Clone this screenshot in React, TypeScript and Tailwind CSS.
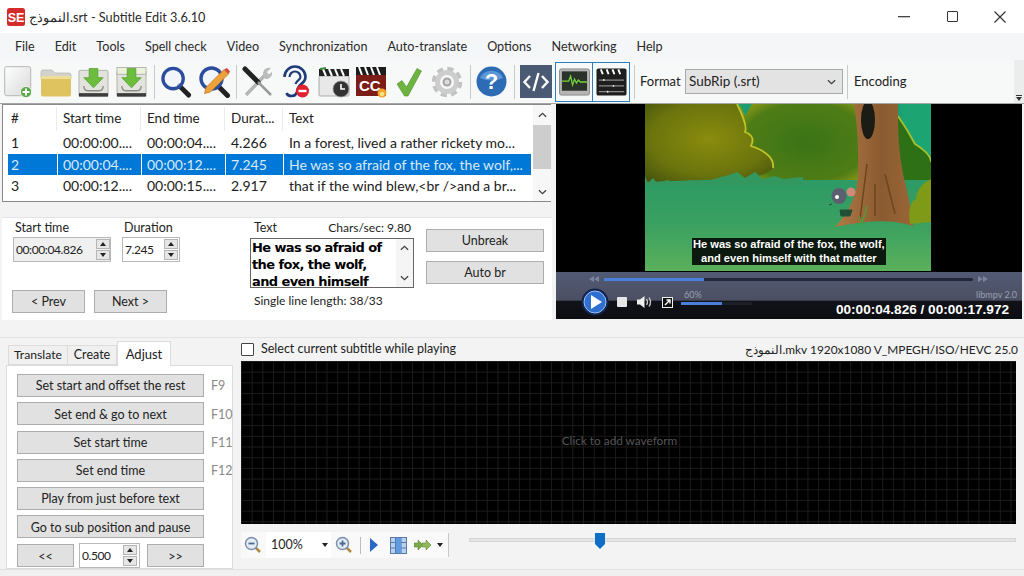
import React from "react";

const Sep = ({ className }: { className: string }) => <div className={`w-px h-[34px] bg-[#c9c9c9] shrink-0 ${className}`} />;

const Btn = ({ className, children }: { className: string; children: React.ReactNode }) => (
  <div className={`flex items-center justify-center shrink-0 bg-[#e1e1e1] border border-[#adadad] text-[#222] pt-[2px] ${className}`}>{children}</div>
);

const Spin = () => (
  <div className="flex flex-col gap-px shrink-0">
    <div className="w-[14px] h-[10px] bg-[#e6e6e6] border border-[#b5b5b5] flex items-center justify-center">
      <div className="w-0 h-0 border-x-[3px] border-x-transparent border-b-[4px] border-b-[#222]" />
    </div>
    <div className="w-[14px] h-[10px] bg-[#e6e6e6] border border-[#b5b5b5] flex items-center justify-center">
      <div className="w-0 h-0 border-x-[3px] border-x-transparent border-t-[4px] border-t-[#222]" />
    </div>
  </div>
);

const Chevron = ({ up }: { up?: boolean }) => (
  <svg viewBox="0 0 10 6" className="w-[9px] h-[6px]">
    <path d={up ? "M1 5L5 1.2L9 5" : "M1 1L5 4.8L9 1"} fill="none" stroke="#444" strokeWidth="1.5" />
  </svg>
);

const NewDoc = ({ className }: { className: string }) => (
  <svg viewBox="0 0 28 32" className={className}>
    <defs><linearGradient id="nd" x1="0" y1="0" x2="1" y2="1"><stop offset="0" stopColor="#fff" /><stop offset="1" stopColor="#d8d8d8" /></linearGradient></defs>
    <rect x="0.7" y="0.7" width="26" height="29" rx="2" fill="url(#nd)" stroke="#b5b5b5" />
    <circle cx="22" cy="26" r="5.6" fill="#58a845" stroke="#fff" strokeWidth="0.8" />
    <path d="M22 22.5v7M18.5 26h7" stroke="#fff" strokeWidth="2" />
  </svg>
);
const Folder = ({ className }: { className: string }) => (
  <svg viewBox="0 0 32 28" className={className}>
    <path d="M1 6V3q0-2 2-2h9l3 3h14q2 0 2 2v4H1z" fill="#d3d3cd" stroke="#b4b4ae" strokeWidth="0.7" />
    <rect x="1" y="7" width="30" height="20.5" rx="2" fill="#dfc35f" />
    <rect x="1" y="7" width="30" height="3" rx="1" fill="#efdd98" />
  </svg>
);
const SaveIcon = ({ className, top }: { className: string; top?: boolean }) => (
  <svg viewBox="0 0 32 32" className={className}>
    <rect x="1" y="4" width="30" height="27" rx="1.5" fill="#e3e3dd" stroke="#a5a59d" strokeWidth="0.8" />
    {top && <rect x="1" y="1" width="30" height="7" fill="#eef2dd" stroke="#a5a59d" strokeWidth="0.8" />}
    {top && <rect x="13" y="3.5" width="2" height="2" fill="#222" />}
    <path d="M6 20q0 5 5 5h10q5 0 5-5" fill="none" stroke="#8d8d85" strokeWidth="1.4" />
    <rect x="1" y="27.5" width="30" height="3.5" fill="#3c3c3c" />
    <path d="M11.5 2h9v9.5h5.5L16 22 6 11.5h5.500z" fill="#6cbc3e" stroke="#4d9a28" strokeWidth="0.7" />
  </svg>
);
const Find = ({ className, pencil }: { className: string; pencil?: boolean }) => (
  <svg viewBox="0 0 33 33" className={className}>
    <path d="M20 21L29.500 30.500" stroke="#222" strokeWidth="5" strokeLinecap="round" />
    <circle cx="13.500" cy="13.500" r="10.500" fill="#eef2f8" fillOpacity="0.7" stroke="#2c4d9d" strokeWidth="3.4" />
    {pencil && <path d="M6.500 28.500L8 22.500L26 4.500L30.500 9L12.500 27z" fill="#eda238" stroke="#b06a1c" strokeWidth="0.6" />}
    {pencil && <path d="M26 4.500L30.500 9L32 6.500L29 3z" fill="#d8473e" />}
  </svg>
);
const Tools = ({ className }: { className: string }) => (
  <svg viewBox="0 0 32 32" className={className}>
    <path d="M25 7L4 29" stroke="#b5b5b5" strokeWidth="3.500" />
    <path d="M21 8a6 6 0 0 1 8-6l-4 4 1.500 2.500L30 6a6 6 0 0 1-7 7z" fill="#bcbcbc" />
    <path d="M3 3L16 16" stroke="#222" strokeWidth="5" strokeLinecap="round" />
    <path d="M16 16L29 29" stroke="#9a9a9a" strokeWidth="2.500" />
  </svg>
);
const Ear = ({ className }: { className: string }) => (
  <svg viewBox="0 0 27 33" className={className}>
    <path d="M2.500 12a10.500 10.500 0 0 1 21 0c0 7-7 6-8 13q-1 6-6 6-4 0-5-3" fill="none" stroke="#1f3c7a" strokeWidth="2.600" />
    <path d="M7.500 12a5.500 5.500 0 0 1 11 0c0 3-4 3-5 7" fill="none" stroke="#1f3c7a" strokeWidth="2.200" />
    <circle cx="20.500" cy="26" r="6.500" fill="#e0202c" />
    <rect x="16.500" y="24.800" width="8" height="2.400" fill="#fff" />
  </svg>
);
const Clapper = ({ className }: { className: string }) => (
  <svg viewBox="0 0 32 32" className={className}>
    <rect x="1" y="10" width="30" height="20" rx="1" fill="#e8e8e8" stroke="#999" strokeWidth="0.8" />
    <rect x="1" y="3" width="30" height="7" fill="#222" />
    <path d="M5 3l3 7M11 3l3 7M17 3l3 7M23 3l3 7" stroke="#fff" strokeWidth="2" />
    <path d="M2 3l6-1" stroke="#3f8f3f" strokeWidth="2" />
    <circle cx="23" cy="23" r="8" fill="#333" stroke="#999" strokeWidth="0.8" />
    <path d="M23 18v5h4" stroke="#fff" strokeWidth="1.600" fill="none" />
  </svg>
);
const CCIcon = ({ className }: { className: string }) => (
  <svg viewBox="0 0 32 32" className={className}>
    <rect x="1" y="1" width="30" height="8" fill="#1c1c1c" />
    <path d="M4 1l3 8M10 1l3 8M16 1l3 8M22 1l3 8" stroke="#fff" strokeWidth="2" />
    <rect x="1" y="9" width="30" height="21" fill="#7c1d18" />
    <text x="4" y="25" fontFamily="Liberation Sans" fontWeight="700" fontSize="15" fill="#fff">CC</text>
    <circle cx="27" cy="27" r="4.500" fill="#f3a52b" />
    <circle cx="27" cy="28" r="2.200" fill="#fbe48a" />
  </svg>
);
const Check = ({ className }: { className: string }) => (
  <svg viewBox="0 0 26 30" className={className}>
    <path d="M1 17L6 13.500L10.500 20L21 1.500L25.500 4L12 29H8.500z" fill="#6cb33f" stroke="#558f2f" strokeWidth="0.6" />
  </svg>
);
const Gear = ({ className }: { className: string }) => (
  <svg viewBox="0 0 32 32" className={className}>
    <circle cx="16" cy="16" r="12.500" fill="none" stroke="#c2c2c2" strokeWidth="5.500" strokeDasharray="5.800 4" />
    <circle cx="16" cy="16" r="9.500" fill="none" stroke="#cdcdcd" strokeWidth="5" />
    <circle cx="16" cy="16" r="4.500" fill="#a5a5a5" />
    <circle cx="16" cy="16" r="2.500" fill="#dcdcdc" />
  </svg>
);
const Help = ({ className }: { className: string }) => (
  <svg viewBox="0 0 31 31" className={className}>
    <circle cx="15.500" cy="15.500" r="15" fill="#2d6cb5" />
    <path d="M4 12a12 10 0 0 1 23 0q-11 5-23 0z" fill="#5c97d6" />
    <text x="15.500" y="23" textAnchor="middle" fontFamily="Liberation Sans" fontWeight="700" fontSize="22" fill="#fff">?</text>
  </svg>
);
const CodeIcon = ({ className }: { className: string }) => (
  <svg viewBox="0 0 32 33" className={className}>
    <rect width="32" height="33" fill="#4a5a72" />
    <path d="M10 11L4.500 17L10 23M22 11L27.500 17L22 23M18.500 8L13.500 26" fill="none" stroke="#fff" strokeWidth="2.400" />
  </svg>
);
const WaveBox = ({ className }: { className: string }) => (
  <div className={`flex items-center justify-center border-[1.500px] border-[#2b7fc0] shrink-0 ${className}`}>
    <svg viewBox="0 0 32 28" className="w-[31px] h-[28px]">
      <rect x="0.500" y="0.500" width="31" height="27" rx="2" fill="#b5b5b5" stroke="#8b8b8b" />
      <rect x="3" y="3" width="26" height="20" fill="#2a3329" />
      <path d="M3 13h7l2-5 2 9 2-6 2 4 2-3 2 2h7" fill="none" stroke="#74d43f" strokeWidth="1.300" />
    </svg>
  </div>
);
const ClapBox = ({ className }: { className: string }) => (
  <div className={`flex items-center justify-center border-[1.500px] border-[#2b7fc0] shrink-0 ${className}`}>
    <svg viewBox="0 0 32 28" className="w-[31px] h-[28px]">
      <rect x="0.500" y="0" width="31" height="28" rx="2" fill="#1e1e1e" />
      <path d="M5 1l2 5M11 1l2 5M17 1l2 5M23 1l2 5" stroke="#fff" strokeWidth="2" />
      <path d="M3 12h26M3 18h26M3 24h26" stroke="#8c8c8c" strokeWidth="1.200" />
      <path d="M8 11v2M18 17v2M12 23v2" stroke="#ddd" strokeWidth="1.500" />
    </svg>
  </div>
);

const Scene = () => (
  <svg viewBox="0 0 286 167" preserveAspectRatio="none" className="w-[286px] h-[167px] shrink-0 block">
    <defs>
      <filter id="sf" x="-2%" y="-2%" width="104%" height="104%"><feGaussianBlur stdDeviation="0.500" /></filter>
      <linearGradient id="gr" x1="0" y1="0" x2="0" y2="1"><stop offset="0" stopColor="#2c9a66" /><stop offset="0.5" stopColor="#3aa160" /><stop offset="1" stopColor="#5bb05a" /></linearGradient>
      <radialGradient id="b1" cx="0.5" cy="0.45" r="0.7"><stop offset="0" stopColor="#8a8c10" /><stop offset="0.65" stopColor="#6b7410" /><stop offset="1" stopColor="#48560f" /></radialGradient>
      <radialGradient id="b2" cx="0.55" cy="0.5" r="0.65"><stop offset="0" stopColor="#3a7412" /><stop offset="0.8" stopColor="#4f7c12" /><stop offset="1" stopColor="#7f9414" /></radialGradient>
      <linearGradient id="tr" x1="0" y1="0" x2="1" y2="0"><stop offset="0" stopColor="#b27a45" /><stop offset="0.6" stopColor="#8a5a30" /><stop offset="1" stopColor="#9a6736" /></linearGradient>
    </defs>
    <g filter="url(#sf)">
      <rect width="286" height="167" fill="#1e9d70" />
      <path d="M255 0h31v60h-20z" fill="#1fa572" />
      <rect y="74" width="286" height="93" fill="url(#gr)" />
      <path d="M95 0L100 12L107 0H215V76H100z" fill="url(#b2)" />
      <path d="M0 0H92Q103 22 100 28Q111 32 106 42Q130 50 128 64Q122 72 100 74L60 76L0 78z" fill="url(#b1)" />
      <path d="M92 0Q103 22 100 28Q111 32 106 42Q130 50 128 64" fill="none" stroke="#c0c42a" strokeWidth="1.800" />
      <path d="M253 12Q262 25 270 40Q286 50 286 58L286 76H250z" fill="#2f7016" />
      <path d="M253 12Q262 25 270 40Q286 50 286 58" fill="none" stroke="#a8c02c" strokeWidth="1.800" />
      <path d="M0 72l3 7 5-5 4 5 10-3 10 3 14-3 14 2 16-5 8-2 8-3 8 6 10-6 8 7 12-3 8 3 20-2 0 8H0z" fill="#33985f" />
      <path d="M209 0H253Q252 40 258 70Q266 100 268 122Q240 112 190 123Q212 100 213 70Q214 30 209 0z" fill="url(#tr)" />
      <ellipse cx="223" cy="16" rx="7" ry="19" fill="#1d1a14" />
      <path d="M222 60L215 115M240 70L250 110M230 80V112" stroke="#6c4522" strokeWidth="1.500" fill="none" />
      <path d="M286 75Q272 82 271 95Q262 100 265 120L286 118z" fill="#7f9a18" />
      <path d="M214 112L217 120L222 102" stroke="#4f9a3c" strokeWidth="1.500" fill="none" />
      <ellipse cx="194" cy="92" rx="7.500" ry="8" fill="#5a6070" />
      <circle cx="206" cy="88" r="4.500" fill="#cf8a7a" />
      <circle cx="192" cy="93" r="2" fill="#fff" />
      <path d="M187 100l-3 1M195 106h12l-2 6h-9z" fill="#235038" stroke="#235038" />
    </g>
  </svg>
);

const Row = ({ n, s, e, d, t, sel }: { n: string; s: string; e: string; d: string; t: string; sel?: boolean }) => {
  const cls = sel ? "bg-[#0078d7] text-[#dbe9f7]" : "text-[#222]";
  return (
    <div className="flex h-[21.7px] items-center gap-px text-[14px]">
      <div className={`w-[49px] h-full flex items-center pl-[3px] ${cls}`}>{n}</div>
      <div className={`w-[83px] h-full flex items-center pl-[5px] ${cls}`}>{s}</div>
      <div className={`w-[83px] h-full flex items-center pl-[5px] ${cls}`}>{e}</div>
      <div className={`w-[57px] h-full flex items-center pl-[5px] ${cls}`}>{d}</div>
      <div className={`w-[247px] h-full flex items-center pl-[5px] whitespace-nowrap ${cls}`}>{t}</div>
    </div>
  );
};

const Rewind = ({ flip }: { flip?: boolean }) => (
  <svg viewBox="0 0 10 6" className="w-[10px] h-[6px] shrink-0">
    <path d={flip ? "M0 0l5 3-5 3zM5 0l5 3-5 3z" : "M10 0L5 3l5 3zM5 0L0 3l5 3z"} fill="#7c849c" />
  </svg>
);

export default function App() {
  return (
    <div className="w-[1024px] h-[576px] overflow-hidden flex flex-col bg-[#f3f3f3] text-[12.500px] leading-none text-[#222] font-['Lato','Noto_Sans','Noto_Sans_CJK_SC',sans-serif]">
      {/* title */}
      <div className="h-[33px] bg-white flex items-center shrink-0 pl-[7px]">
        <svg viewBox="0 0 18 18" className="w-[18px] h-[18px] shrink-0">
          <rect width="18" height="18" rx="2.500" fill="#d42b2b" />
          <text x="9" y="13.500" textAnchor="middle" fontFamily="Liberation Sans" fontWeight="700" fontSize="12.500" fill="#fff">SE</text>
        </svg>
        <span className="ml-[4px] pt-[2px] text-[#2a2a2a] text-[12.700px]">النموذج.srt - Subtitle Edit 3.6.10</span>
        <div className="ml-auto flex items-center">
          <svg viewBox="0 0 12 2" className="w-[12px] h-[2px] mr-[37px]"><rect width="12" height="1.300" fill="#444" /></svg>
          <div className="w-[11px] h-[11px] border-[1.300px] border-[#333] rounded-[1px] mr-[36px]" />
          <svg viewBox="0 0 12 12" className="w-[12px] h-[12px] mr-[18px]"><path d="M.5.5l11 11M11.500.5l-11 11" stroke="#333" strokeWidth="1.200" /></svg>
        </div>
      </div>
      {/* menu */}
      <div className="h-[27px] bg-[#f5f6f7] flex items-center gap-5 pl-[15px] pt-[2px] shrink-0 text-[#2a2a2a] text-[12.600px]">
        <span>File</span><span>Edit</span><span>Tools</span><span>Spell check</span><span>Video</span>
        <span>Synchronization</span><span>Auto-translate</span><span>Options</span><span>Networking</span><span>Help</span>
      </div>
      {/* toolbar */}
      <div className="h-[44px] bg-[#f7f8f8] flex items-center pl-[4px] shrink-0 border-b border-b-[#a5a5a5] relative text-[13px]">
        <NewDoc className="w-[28px] h-[32px] shrink-0" />
        <Folder className="w-[32px] h-[28px] ml-[8px] mt-[2px] shrink-0" />
        <SaveIcon className="w-[31px] h-[32px] ml-[6px] shrink-0" />
        <SaveIcon top className="w-[31px] h-[32px] ml-[7px] shrink-0" />
        <Sep className="ml-[7px]" />
        <Find className="w-[32px] h-[33px] ml-[5px] shrink-0" />
        <Find pencil className="w-[33px] h-[33px] ml-[6px] shrink-0" />
        <Sep className="ml-[5px]" />
        <Tools className="w-[32px] h-[32px] ml-[5px] shrink-0" />
        <Ear className="w-[27px] h-[33px] ml-[8px] shrink-0" />
        <Clapper className="w-[32px] h-[32px] ml-[9px] shrink-0" />
        <CCIcon className="w-[32px] h-[32px] ml-[5px] shrink-0" />
        <Check className="w-[26px] h-[30px] ml-[9px] shrink-0" />
        <Gear className="w-[32px] h-[32px] ml-[9px] shrink-0" />
        <Sep className="ml-[7px]" />
        <Help className="w-[31px] h-[31px] ml-[5px] shrink-0" />
        <Sep className="ml-[7px]" />
        <CodeIcon className="w-[32px] h-[33px] ml-[5px] shrink-0" />
        <WaveBox className="w-[38px] h-[40px] ml-[3px]" />
        <ClapBox className="w-[38px] h-[40px] -ml-px" />
        <Sep className="ml-[4px]" />
        <span className="ml-[5px] w-[40px] shrink-0">Format</span>
        <div className="ml-[5px] w-[158px] h-[25px] bg-[#e3e3e3] border border-[#a8a8a8] flex items-center pl-[3px] pr-[6px] justify-between shrink-0">
          <span className="text-[13.500px]">SubRip (.srt)</span>
          <Chevron />
        </div>
        <Sep className="ml-[4px]" />
        <span className="ml-[6px]">Encoding</span>
        <div className="ml-auto self-stretch w-[10px] bg-[#ececec] flex flex-col justify-end items-center pb-[2px]">
          <div className="w-[6px] h-px bg-[#333] mb-px" />
          <div className="w-0 h-0 border-x-[3px] border-x-transparent border-t-[4px] border-t-[#333]" />
        </div>
      </div>
      {/* top area */}
      <div className="h-[216px] flex shrink-0">
        <div className="w-[556px] shrink-0 pl-[2px] flex flex-col">
          <div className="w-[549px] h-[98px] shrink-0 border border-[#8a8a8a] bg-white flex pl-[5px]">
            <div className="w-[525px] shrink-0 flex flex-col">
              <div className="flex h-[27px] items-center gap-px text-[#222] text-[13.500px]">
                <div className="w-[49px] h-[24px] flex items-center pl-[3px] border-r border-r-[#ececec]">#</div>
                <div className="w-[83px] h-[24px] flex items-center pl-[5px] border-r border-r-[#ececec]">Start time</div>
                <div className="w-[83px] h-[24px] flex items-center pl-[5px] border-r border-r-[#ececec]">End time</div>
                <div className="w-[57px] h-[24px] flex items-center pl-[5px] border-r border-r-[#ececec]">Durat...</div>
                <div className="w-[247px] h-[24px] flex items-center pl-[5px]">Text</div>
              </div>
              <Row n="1" s="00:00:00...." e="00:00:04...." d="4.266" t="In a forest, lived a rather rickety mo..." />
              <Row sel n="2" s="00:00:04...." e="00:00:12...." d="7.245" t="He was so afraid of the fox, the wolf,..." />
              <Row n="3" s="00:00:12...." e="00:00:15...." d="2.917" t="that if the wind blew,<br />and a br..." />
            </div>
            <div className="ml-auto w-[18px] shrink-0 flex flex-col items-center bg-[#f7f7f7]">
              <div className="h-[20px] flex items-center"><Chevron up /></div>
              <div className="w-full h-[44px] bg-[#cdcdcd]" />
              <div className="mt-auto h-[18px] flex items-center"><Chevron /></div>
            </div>
          </div>
          {/* edit panel */}
          <div className="mt-[15px] w-[550px] h-[103px] bg-white border-t border-t-[#e4e4e4] flex pl-[9px]">
            <div className="w-[236px] shrink-0 flex flex-col">
              <div className="flex mt-[2px] pl-[2px]">
                <div className="w-[109px] shrink-0">
                  <div className="h-[15px] pt-[2px] flex items-center pl-[2px]">Start time</div>
                  <div className="mt-[2px] w-[98px] h-[25px] bg-[#f0f0f0] border border-[#b8b8b8] flex items-center pl-[2px]">
                    <span className="w-[80px] text-[12px] tracking-[-0.400px]">00:00:04.826</span>
                    <Spin />
                  </div>
                </div>
                <div className="shrink-0">
                  <div className="h-[15px] pt-[2px] flex items-center pl-[2px]">Duration</div>
                  <div className="mt-[2px] w-[58px] h-[25px] bg-white border border-[#b8b8b8] flex items-center pl-[2px]">
                    <span className="w-[39px] text-[12px] tracking-[-0.400px]">7.245</span>
                    <Spin />
                  </div>
                </div>
              </div>
              <div className="flex gap-[9px] mt-[28px] ml-px">
                <Btn className="w-[73px] h-[23px]">&lt; Prev</Btn>
                <Btn className="w-[73px] h-[23px]">Next &gt;</Btn>
              </div>
            </div>
            <div className="w-[164px] shrink-0 ml-[3px] flex flex-col">
              <div className="h-[15px] mt-[2px] pt-[2px] flex items-center justify-between pl-[4px] pr-[3px]">
                <span className="text-[12.500px]">Text</span><span className="text-[12.100px]">Chars/sec: 9.80</span>
              </div>
              <div className="mt-[3px] h-[50px] border border-[#666] bg-white flex overflow-hidden">
                <div className="flex-1 pl-[1px] font-['DejaVu_Sans',sans-serif] font-bold text-[13px] tracking-[-0.600px] leading-[17px] text-black whitespace-nowrap">
                  He was so afraid of<br />the fox, the wolf,<br />and even himself
                </div>
                <div className="w-[17px] bg-[#f5f5f5] flex flex-col items-center justify-between py-[6px]"><Chevron up /><Chevron /></div>
              </div>
              <div className="h-[15px] mt-[5px] flex items-center pl-[4px] text-[12px]">Single line length: 38/33</div>
            </div>
            <div className="ml-[12px] mt-[11px] flex flex-col gap-[9px] shrink-0">
              <Btn className="w-[118px] h-[23px]">Unbreak</Btn>
              <Btn className="w-[118px] h-[23px]">Auto br</Btn>
            </div>
          </div>
        </div>
        <div className="w-[466px] h-[215px] shrink-0 flex flex-col bg-black">
          <div className="h-[167px] flex justify-center pr-[2px] shrink-0 relative">
            <Scene />
            <div className="absolute left-[136px] top-[134px] bg-black/85 text-white font-['Liberation_Sans',sans-serif] font-bold text-[11.100px] leading-[13.500px] text-center px-[1px] whitespace-nowrap">
              He was so afraid of the fox, the wolf,<br />and even himself with that matter
            </div>
          </div>
          <div className="h-[48px] mt-px bg-[linear-gradient(#525a74_0%,#4b4f62_60%,#101218_62%,#0d0e12_100%)] flex flex-col">
            <div className="h-[14px] flex items-center">
              <div className="ml-[33px]"><Rewind /></div>
              <div className="ml-[5px] w-[369px] h-[3px] bg-[#22273a] rounded-full">
                <div className="w-[100px] h-full bg-[#4a7fdc]" />
              </div>
              <div className="ml-[5px]"><Rewind flip /></div>
            </div>
            <div className="flex items-center h-[32px]">
              <svg viewBox="0 0 28 28" className="w-[28px] h-[28px] ml-[25px] shrink-0">
                <circle cx="14" cy="14" r="13.500" fill="#12244f" />
                <circle cx="14" cy="14" r="11" fill="#2f6fd0" stroke="#9cc0f0" strokeWidth="1" />
                <path d="M10 7L21 14L10 21z" fill="#fff" />
              </svg>
              <div className="ml-[8px] w-[10px] h-[10px] bg-[#e6e6e6] rounded-[1px] shrink-0" />
              <svg viewBox="0 0 16 14" className="w-[16px] h-[14px] ml-[10px] shrink-0">
                <path d="M0 4.500h3L7.500 1v12L3 9.500H0z" fill="#eee" />
                <path d="M9.500 4q2 3 0 6M12 2.500q3 4.500 0 9" fill="none" stroke="#ccc" strokeWidth="1.300" />
              </svg>
              <svg viewBox="0 0 11 11" className="w-[11px] h-[11px] ml-[9px] shrink-0">
                <rect x="0.500" y="0.500" width="10" height="10" fill="#111" stroke="#eee" />
                <path d="M3 8L8 3M4.500 3H8V6.500" stroke="#fff" strokeWidth="1.400" fill="none" />
              </svg>
              <div className="ml-[8px] w-[72px] shrink-0 flex flex-col -mt-[9px]">
                <span className="text-[9px] text-[#9aa0b4] pl-[3px] h-[10px]">60%</span>
                <div className="mt-[2px] w-[71px] h-[3px] bg-[#1d1f28]"><div className="w-[41px] h-full bg-[#4a7fdc]" /></div>
              </div>
              <div className="flex-1 flex flex-col items-end pr-[5px] mt-[2px] min-w-0">
                <span className="text-[9px] text-[#9aa0b4] h-[11px]">libmpv 2.0</span>
                <span className="mt-[2px] pr-[8px] text-white font-['Liberation_Sans',sans-serif] font-bold text-[13.600px] whitespace-nowrap">00:00:04.826 / 00:00:17.972</span>
              </div>
            </div>
          </div>
        </div>
      </div>
      {/* strip */}
      <div className="h-[18px] shrink-0 border-b border-b-[#e2e2e2]" />
      {/* bottom */}
      <div className="flex-1 flex min-h-0">
        <div className="w-[227px] ml-[6px] shrink-0 flex flex-col pt-[3px]">
          <div className="flex h-[25px] items-end pl-[2px]">
            <div className="w-[60px] h-[20px] bg-[#f0f0f0] border border-[#dcdcdc] flex items-center justify-center text-[12.200px]">Translate</div>
            <div className="w-[49px] h-[20px] bg-[#f0f0f0] border border-[#dcdcdc] border-l-0 flex items-center justify-center">Create</div>
            <div className="w-[54px] h-[25px] bg-white border border-[#dcdcdc] border-b-0 flex items-center justify-center -mb-px z-10 text-[13px]">Adjust</div>
          </div>
          <div className="h-[205px] bg-white border border-[#dcdcdc] pl-[10px] pt-[8px] flex flex-col gap-[5.300px]">
            {[
              ["Set start and offset the rest", "F9"],
              ["Set end & go to next", "F10"],
              ["Set start time", "F11"],
              ["Set end time", "F12"],
              ["Play from just before text", ""],
              ["Go to sub position and pause", ""],
            ].map(([t, f]) => (
              <div key={t} className="flex items-center">
                <Btn className="w-[187px] h-[23px]">{t}</Btn>
                <span className="ml-[7px] pt-[2px] text-[#8a8a8a]">{f}</span>
              </div>
            ))}
            <div className="flex items-center -mt-[0.500px]">
              <Btn className="w-[57px] h-[23px]">&lt;&lt;</Btn>
              <div className="ml-[5px] w-[61px] h-[25px] border border-[#b8b8b8] bg-white flex items-center pl-[2px] shrink-0">
                <span className="w-[41px] text-[12px] tracking-[-0.400px]">0.500</span>
                <Spin />
              </div>
              <Btn className="ml-[7px] w-[57px] h-[23px]">&gt;&gt;</Btn>
            </div>
          </div>
        </div>
        <div className="w-[775px] ml-[8px] shrink-0 flex flex-col">
          <div className="h-[23px] flex items-center shrink-0">
            <div className="w-[13px] h-[13px] border border-[#444] bg-white rounded-[1px] shrink-0" />
            <span className="ml-[7px]">Select current subtitle while playing</span>
            <span className="ml-auto -mr-[2px] whitespace-nowrap text-[11.900px]">النموذج.mkv 1920x1080 V_MPEGH/ISO/HEVC 25.0</span>
          </div>
          <div className="h-[163px] shrink-0 flex items-center justify-center pr-[18px] pb-[4px] bg-black bg-[linear-gradient(#1b1b1b_1px,transparent_1px),linear-gradient(90deg,#1b1b1b_1px,transparent_1px)] bg-[size:10.700px_10.700px] text-[#555] text-[11.800px]">
            Click to add waveform
          </div>
          <div className="flex items-center h-[34px] mt-[4px] shrink-0">
            <div className="flex items-center h-[26px] bg-[#f9f9f9] shrink-0">
              <svg viewBox="0 0 18 18" className="w-[18px] h-[18px] ml-[3px] shrink-0">
                <path d="M11 11l5 5" stroke="#b08a3e" strokeWidth="2.500" />
                <circle cx="7.500" cy="7.500" r="6" fill="#e4edf6" stroke="#7d90ab" strokeWidth="1.500" />
                <path d="M4.500 7.500h6" stroke="#4f6a92" strokeWidth="1.800" />
              </svg>
              <div className="ml-[4px] w-[65px] h-[26px] bg-white flex items-center pl-[5px] pr-[3px] justify-between shrink-0">
                <span>100%</span>
                <div className="w-0 h-0 border-x-[3px] border-x-transparent border-t-[4px] border-t-[#222]" />
              </div>
              <svg viewBox="0 0 18 18" className="w-[18px] h-[18px] ml-[4px] shrink-0">
                <path d="M11 11l5 5" stroke="#b08a3e" strokeWidth="2.500" />
                <circle cx="7.500" cy="7.500" r="6" fill="#e4edf6" stroke="#7d90ab" strokeWidth="1.500" />
                <path d="M4.500 7.500h6M7.500 4.500v6" stroke="#4f6a92" strokeWidth="1.800" />
              </svg>
              <div className="ml-[7px] w-px h-[17px] bg-[#bcbcbc]" />
              <svg viewBox="0 0 8 14" className="w-[8px] h-[14px] ml-[9px] shrink-0"><path d="M0 0L8 7L0 14z" fill="#2b67c4" /></svg>
              <svg viewBox="0 0 17 17" className="w-[17px] h-[17px] ml-[12px] shrink-0">
                <rect x="0.500" y="0.500" width="16" height="16" fill="#b7d2f0" stroke="#5a7ba8" />
                <path d="M5.500 0v17M11 0v17M11 5.500h6M11 11h6M0 5.500h5.500M0 11h5.500" stroke="#5a7ba8" />
                <rect x="6" y="1" width="5" height="15" fill="#5f9be0" />
              </svg>
              <svg viewBox="0 0 18 10" className="w-[18px] h-[10px] ml-[7px] shrink-0">
                <path d="M0 3h4V0l5 5-5 5V7H0z" fill="#7da94a" stroke="#4f7a2a" strokeWidth="0.500" />
                <path d="M8 3h4V0l5 5-5 5V7H8z" fill="#8fba58" stroke="#4f7a2a" strokeWidth="0.500" />
              </svg>
              <div className="ml-[5px] w-0 h-0 border-x-[3px] border-x-transparent border-t-[4px] border-t-[#222]" />
              <div className="ml-[5px] w-px h-[24px] bg-[#c8c8c8]" />
            </div>
            <div className="ml-[20px] flex-1 h-[4px] bg-[#e4e4e4] border border-[#d6d6d6] relative -mt-[10px]">
              <svg viewBox="0 0 10 16" className="absolute left-[125px] -top-[6px] w-[10px] h-[16px]"><path d="M0 0H10V11L5 16L0 11z" fill="#0f6fc6" /></svg>
            </div>
          </div>
        </div>
      </div>
      <div className="h-[7px] shrink-0 bg-[#f0f0f0] border-t border-t-[#e0e0e0]" />
    </div>
  );
}
